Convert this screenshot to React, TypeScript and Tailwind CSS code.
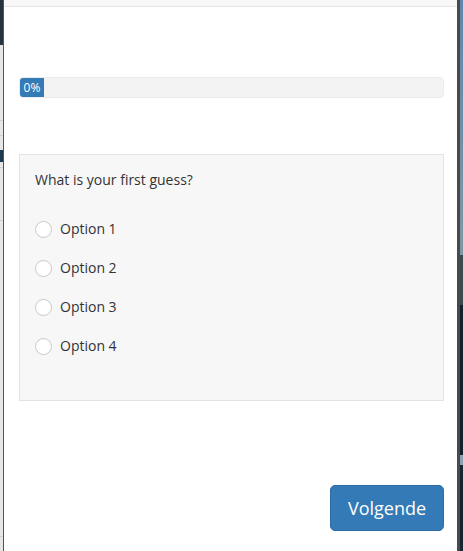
import React from 'react'

const options = ['Option 1', 'Option 2', 'Option 3', 'Option 4']

// Thin slice of the page behind the modal (left side)
function LeftBackdrop() {
  return (
    <div className="flex w-[3px] flex-col bg-[#e6e6e6]">
      <div className="h-[45px] bg-[#27323d]" />
      <div className="mt-[75px] h-px bg-[#cfcfcf]" />
      <div className="mt-[14px] h-px bg-[#cfcfcf]" />
      <div className="mt-[14px] h-[12px] bg-[#1f3a4f]" />
      <div className="mt-[5px] h-px bg-[#cfcfcf]" />
      <div className="mt-[52px] h-px bg-[#cfcfcf]" />
      <div className="flex-1" />
      <div className="mb-[14px] h-px bg-[#cfcfcf]" />
    </div>
  )
}

// Slice of the desktop wallpaper (right side)
function RightBackdrop() {
  return (
    <div className="flex w-[3px] flex-col">
      <div className="h-[255px] bg-gradient-to-b from-[#5f87ad] to-[#7f97a3]" />
      <div className="h-[50px] bg-[#3a4a4e]" />
      <div className="h-[150px] bg-[#15202e]" />
      <div className="h-[10px] bg-[#8ea0b3]" />
      <div className="flex-1 bg-[#1a2533]" />
    </div>
  )
}

function Radio({ label }: { label: string }) {
  return (
    <label className="flex h-[20px] items-center">
      <span className="h-[17px] w-[17px] rounded-full border border-[#c9c9c9] bg-white" />
      <span className="ml-[8px] text-[14px] leading-[20px] text-[#333]">{label}</span>
    </label>
  )
}

export default function App() {
  return (
    <div
      className="flex h-[551px] w-[463px] overflow-hidden bg-white"
      style={{ fontFamily: '"Open Sans", "Noto Sans", sans-serif' }}
    >
      <LeftBackdrop />
      <div className="flex w-[457px] flex-col border-l border-r-[3px] border-l-[#555] border-r-[#4a4a4a] bg-white">
        {/* modal header strip */}
        <div className="h-[7px] border-b border-[#e5e5e5] bg-[#f7f7f7]" />

        <div className="flex flex-1 flex-col pl-[15px] pr-[13px]">
          {/* progress */}
          <div className="mt-[70px] flex h-[21px] overflow-hidden rounded-[4px] border border-[#ececec] bg-[#f3f3f3]">
            <div className="flex w-[24px] items-center justify-center bg-[#337ab7] text-[12px] text-white">
              0%
            </div>
          </div>

          {/* question panel */}
          <div className="mt-[56px] h-[247px] border border-[#e3e3e3] bg-[#f7f7f7] px-[15px] pt-[15px]">
            <p className="text-[14px] leading-[20px] text-[#333]">What is your first guess?</p>
            <div className="mt-[29px] flex flex-col gap-[19px]">
              {options.map((o) => (
                <Radio key={o} label={o} />
              ))}
            </div>
          </div>

          {/* footer */}
          <div className="mt-[84px] flex justify-end">
            <button className="h-[46px] w-[114px] rounded-[5px] border border-[#2e6da4] bg-[#337ab7] text-[18px] text-white">
              Volgende
            </button>
          </div>
        </div>
      </div>
      <RightBackdrop />
    </div>
  )
}
